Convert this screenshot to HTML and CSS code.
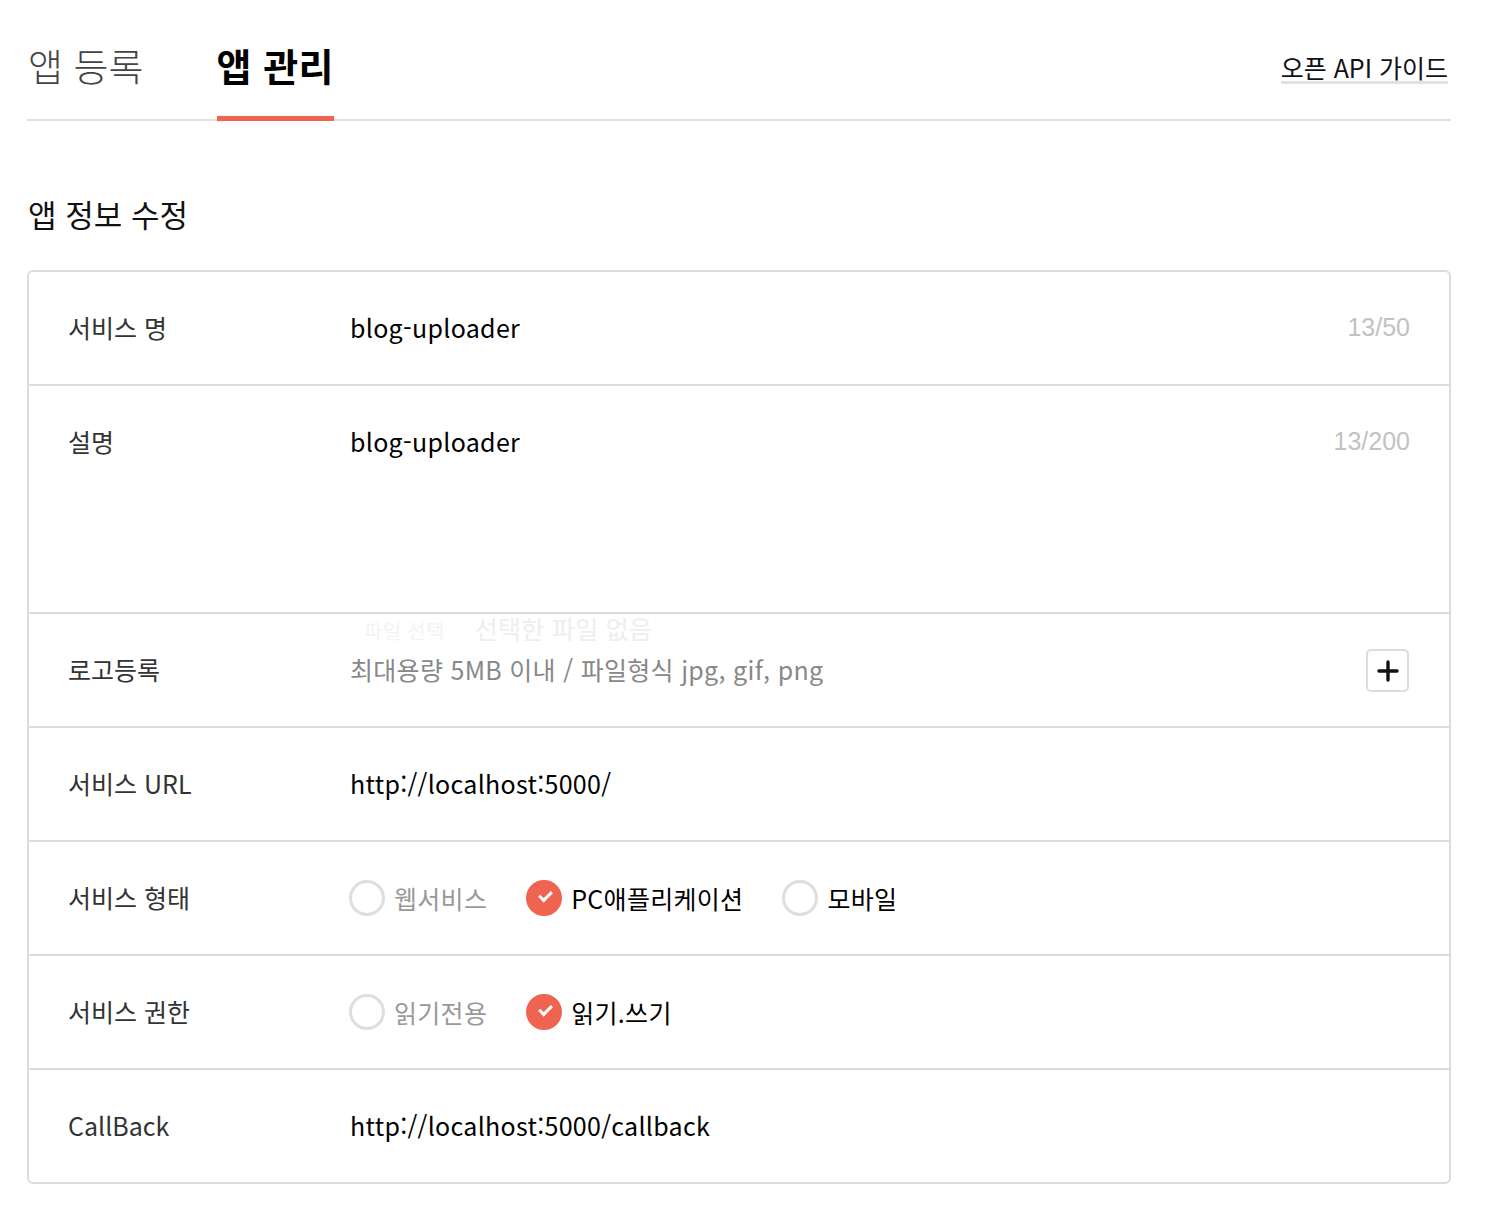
FILE: index.html
```html
<!DOCTYPE html>
<html lang="ko">
<head>
    <meta charset="UTF-8">
    <meta name="viewport" content="width=device-width, initial-scale=1.0">
    <title>앱 관리</title>
    <link rel="stylesheet" href="styles.css">
</head>
<body>
    <div class="page">
        <div class="tabs">
            <a class="tab">앱 등록</a>
            <a class="tab active">앱 관리</a>
            <a class="guide-link">오픈 API 가이드</a>
        </div>

        <h2 class="section-title">앱 정보 수정</h2>

        <div class="form-card">
            <div class="form-row">
                <div class="label">서비스 명</div>
                <div class="value">blog-uploader</div>
                <div class="counter">13/50</div>
            </div>
            <div class="form-row tall">
                <div class="label">설명</div>
                <div class="value">blog-uploader</div>
                <div class="counter">13/200</div>
            </div>
            <div class="form-row">
                <div class="label">로고등록</div>
                <div class="value hint">
                    <span class="file-ghost"><small>파일 선택</small>선택한 파일 없음</span>
                    최대용량 5MB 이내 / 파일형식 jpg, gif, png
                </div>
                <button class="add-btn">
                    <svg width="22" height="22" viewBox="0 0 22 22"><path d="M11 2v18M2 11h18" stroke="#111" stroke-width="3.4" stroke-linecap="round"/></svg>
                </button>
            </div>
            <div class="form-row">
                <div class="label">서비스 URL</div>
                <div class="value">http://localhost:5000/</div>
            </div>
            <div class="form-row">
                <div class="label">서비스 형태</div>
                <div class="value options">
                    <label class="radio"><span class="dot"></span><span class="muted">웹서비스</span></label>
                    <label class="radio checked"><span class="dot"></span>PC애플리케이션</label>
                    <label class="radio"><span class="dot"></span>모바일</label>
                </div>
            </div>
            <div class="form-row">
                <div class="label">서비스 권한</div>
                <div class="value options">
                    <label class="radio"><span class="dot"></span><span class="muted">읽기전용</span></label>
                    <label class="radio checked"><span class="dot"></span>읽기.쓰기</label>
                </div>
            </div>
            <div class="form-row">
                <div class="label">CallBack</div>
                <div class="value">http://localhost:5000/callback</div>
            </div>
        </div>
    </div>
</body>
</html>
```

FILE: styles.css
```css
body {
    margin: 0;
    font-family: "Noto Sans CJK KR", "Noto Sans", sans-serif;
    color: #111;
    background: #fff;
}

.page {
    width: 1424px;
    margin-left: 27px;
    padding-top: 36px;
}

/* tabs */
.tabs {
    display: flex;
    align-items: flex-end;
    border-bottom: 2px solid #e0e0e0;
    height: 83px;
}

.tab {
    position: relative;
    font-size: 38px;
    font-weight: 300;
    color: #444;
    line-height: 50px;
    padding: 0 0 29px 1px;
    margin-right: 73px;
}

.tab.active {
    font-weight: 700;
    color: #000;
    padding-left: 0;
    letter-spacing: 0.5px;
}

.tab.active::after {
    content: "";
    position: absolute;
    left: 0;
    right: 0;
    bottom: -2px;
    height: 5px;
    background: #ef6451;
}

.guide-link {
    margin-left: auto;
    margin-right: 3px;
    align-self: flex-start;
    margin-top: 17px;
    font-size: 25px;
    line-height: 28px;
    color: #111;
    border-bottom: 3px solid #e2e2e2;
}

.section-title {
    margin: 73px 0 36px 1px;
    font-size: 31px;
    font-weight: 400;
    line-height: 40px;
}

/* form */
.form-card {
    border: 2px solid #dcdcdc;
    border-radius: 6px;
}

.form-row {
    position: relative;
    display: flex;
    align-items: flex-start;
    padding: 38px 40px 38px 39px;
    font-size: 25px;
    line-height: 35px;
    height: 36px;
    border-bottom: 2px solid #dcdcdc;
}

.form-row:last-child {
    border-bottom: none;
}

.form-row.tall {
    height: 150px;
}

.label {
    width: 282px;
    flex-shrink: 0;
    color: #333;
}

.value {
    flex: 1;
    color: #000;
    letter-spacing: 0.3px;
}

.counter {
    color: #c2c2c2;
    font-family: "Liberation Sans", Arial, sans-serif;
    font-size: 25px;
    margin-right: -1px;
}

.hint {
    color: #888;
}

.file-ghost {
    position: absolute;
    left: 320px;
    top: -3px;
    color: #eeeeee;
    font-size: 25px;
}

.file-ghost small {
    font-size: 20px;
    color: #f3f3f3;
    margin: 0 30px 0 15px;
}

.add-btn {
    width: 43px;
    height: 43px;
    margin-top: -3px;
    border: 2px solid #dcdcdc;
    border-radius: 5px;
    background: #fff;
    display: flex;
    align-items: center;
    justify-content: center;
    padding: 0;
}

.options {
    display: flex;
    gap: 40px;
}

.radio {
    display: flex;
    align-items: center;
    gap: 9px;
    margin-left: -1px;
}

.dot {
    width: 30px;
    height: 30px;
    border: 3px solid #dedede;
    border-radius: 50%;
    position: relative;
}

.radio.checked .dot {
    background: #ef6451;
    border-color: #ef6451;
}

.radio.checked .dot::after {
    content: "";
    position: absolute;
    left: 10px;
    top: 8px;
    width: 10px;
    height: 5px;
    border-left: 3px solid #fff;
    border-bottom: 3px solid #fff;
    transform: rotate(-45deg);
}

.muted {
    color: #999;
}
```
